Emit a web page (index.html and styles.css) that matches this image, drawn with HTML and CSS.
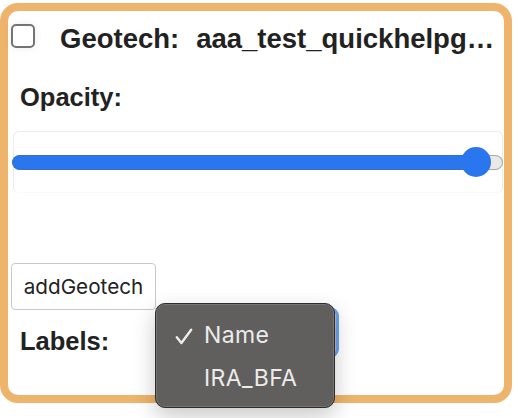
FILE: index.html
```html
<!DOCTYPE html>
<html>
<head>
<meta charset="utf-8">
<link rel="stylesheet" href="styles.css">
</head>
<body>
<div class="card">
  <div class="header">
    <span class="checkbox"></span>
    <h2 class="title"><span class="kind">Geotech:</span><span class="name">aaa_test_quickhelpg…</span></h2>
  </div>
  <div class="label opacity">Opacity:</div>
  <div class="slider-box">
    <div class="slider">
      <div class="fill"></div>
      <div class="rest"></div>
      <div class="thumb"></div>
    </div>
  </div>
  <button class="add">addGeotech</button>
  <div class="labels-row">
    <span class="label labels">Labels:</span>
    <div class="select">
      <div class="menu">
        <div class="item selected">
          <span class="check"><svg width="18" height="17" viewBox="0 0 18 17"><path d="M1.8 9.2 L6.4 15 L16.2 1.8" fill="none" stroke="#ececec" stroke-width="2.4" stroke-linecap="round" stroke-linejoin="round"/></svg></span>
          <span class="text">Name</span>
        </div>
        <div class="item">
          <span class="check"></span>
          <span class="text">IRA_BFA</span>
        </div>
      </div>
    </div>
  </div>
</div>
</body>
</html>
```
FILE: styles.css
```css
html, body {
  margin: 0;
  padding: 0;
  background: #ffffff;
}
body {
  width: 518px;
  height: 418px;
  overflow: hidden;
  font-family: "Liberation Sans", Arial, sans-serif;
  color: #222222;
}
.card {
  margin-top: 3px;
  width: 512px;
  height: 400px;
  box-sizing: border-box;
  border: 8px solid #eeb46b;
  border-radius: 18px;
  display: flex;
  flex-direction: column;
  align-items: flex-start;
}
.header {
  display: flex;
  align-items: flex-start;
  padding-top: 13px;
  padding-left: 3px;
  width: 100%;
  box-sizing: border-box;
}
.checkbox {
  flex: none;
  width: 24px;
  height: 24px;
  box-sizing: border-box;
  border: 2px solid #747474;
  border-radius: 5px;
  background: #ffffff;
  box-shadow: 0 0 8px rgba(0, 0, 0, 0.08);
}
.title {
  margin: 3px 0 0 25px;
  font-size: 27.5px;
  line-height: 24px;
  font-weight: bold;
  white-space: nowrap;
  display: flex;
  gap: 17px;
  padding-bottom: 4px;
}
.label {
  font-size: 25.5px;
  line-height: 30px;
  font-weight: bold;
}
.opacity {
  margin-top: 27px;
  margin-left: 12px;
}
.slider-box {
  margin-top: 19px;
  margin-left: 5px;
  width: 490px;
  height: 62px;
  box-sizing: border-box;
  border: 1px solid #ececec;
  border-bottom-color: #f9f9f9;
  border-radius: 6px;
  padding-top: 23px;
}
.slider {
  position: relative;
  margin-left: -2px;
  width: 491px;
  height: 15px;
  display: flex;
}
.fill {
  width: 468px;
  height: 15px;
  box-sizing: border-box;
  background: #2a76ee;
  border: 1px solid #3a6dc4;
  border-right: none;
  border-radius: 8px 0 0 8px;
}
.rest {
  flex: 1;
  height: 15px;
  box-sizing: border-box;
  background: #e9e9e9;
  border: 1.5px solid #a8a8a8;
  border-left: none;
  border-radius: 0 8px 8px 0;
}
.thumb {
  position: absolute;
  left: 449px;
  top: -8px;
  width: 30px;
  height: 30px;
  border-radius: 50%;
  background: #2a76ee;
}
.add {
  margin-top: 70px;
  margin-left: 3px;
  width: 145px;
  height: 47px;
  box-sizing: border-box;
  border: 1px solid #c9c9c9;
  border-radius: 4px;
  background: #ffffff;
  font-family: Inter, "Noto Sans", sans-serif;
  font-size: 20.7px;
  color: #222222;
  padding: 0;
}
.labels-row {
  display: flex;
  align-items: flex-start;
}
.labels {
  flex: none;
  width: 100px;
  margin-top: 16px;
  margin-left: 12px;
}
.select {
  position: relative;
  margin-left: 45px;
  width: 171px;
  height: 45px;
  box-sizing: border-box;
  border: 1px solid #bcbcbc;
  border-radius: 6px;
  background: #ffffff;
  box-shadow: 0 0 0 3px rgba(56, 132, 238, 0.75);
}
.menu {
  position: absolute;
  left: -11px;
  top: -8px;
  width: 180px;
  height: 105px;
  box-sizing: border-box;
  padding-top: 10px;
  background: #605f5d;
  border: 1px solid #2c2c2c;
  border-radius: 10px;
  box-shadow: inset 0 0 0 1px rgba(255, 255, 255, 0.14), 0 8px 22px rgba(0, 0, 0, 0.22);
  font-family: Inter, "Noto Sans", sans-serif;
  font-size: 23px;
  letter-spacing: 0.4px;
  color: #ececec;
}
.item {
  display: flex;
  align-items: center;
  height: 43px;
  line-height: 43px;
}
.check {
  width: 29px;
  margin-left: 19px;
  display: flex;
  align-items: center;
  height: 43px;
  padding-top: 2px;
  box-sizing: border-box;
}
```
